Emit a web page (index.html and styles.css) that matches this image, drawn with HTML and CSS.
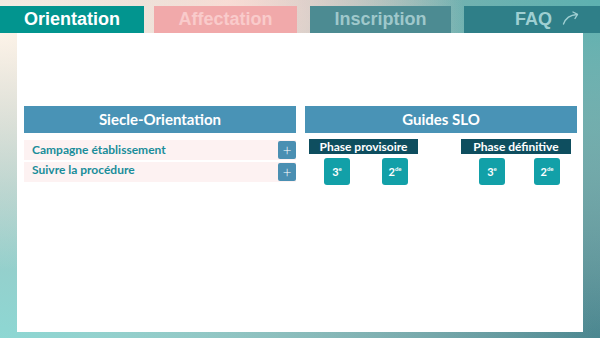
FILE: index.html
```html
<!DOCTYPE html>
<html lang="fr">

<head>
    <meta charset="UTF-8">
    <meta name="viewport" content="width=device-width, initial-scale=1.0">
    <title>Orientation</title>
    <link rel="stylesheet" href="styles.css">
</head>

<body>

    <nav class="tabs">
        <a class="tab tab-orientation">Orientation</a>
        <a class="tab tab-affectation">Affectation</a>
        <a class="tab tab-inscription">Inscription</a>
        <a class="tab tab-faq">FAQ
            <svg class="faq-arrow" width="18" height="14" viewBox="0 0 18 14">
                <path d="M1.5 13 C3.5 7.5 8 4 15 3.5" fill="none" stroke="currentColor" stroke-width="1.4" stroke-linecap="round"/>
                <path d="M11 1 L15.5 3.3 L13 7.5" fill="none" stroke="currentColor" stroke-width="1.4" stroke-linecap="round" stroke-linejoin="round"/>
            </svg>
        </a>
    </nav>

    <main class="panel">
        <section class="column">
            <h2 class="column-title">Siecle-Orientation</h2>
            <div class="rows">
                <div class="row">
                    <span class="row-label">Campagne établissement</span>
                    <button class="plus">+</button>
                </div>
                <div class="row">
                    <span class="row-label">Suivre la procédure</span>
                    <button class="plus">+</button>
                </div>
            </div>
        </section>

        <section class="column">
            <h2 class="column-title">Guides SLO</h2>
            <div class="phases">
                <div class="phase phase-first">
                    <div class="phase-title">Phase provisoire</div>
                    <div class="levels">
                        <button class="level">3<sup>e</sup></button>
                        <button class="level">2<sup>de</sup></button>
                    </div>
                </div>
                <div class="phase phase-second">
                    <div class="phase-title">Phase définitive</div>
                    <div class="levels">
                        <button class="level">3<sup>e</sup></button>
                        <button class="level">2<sup>de</sup></button>
                    </div>
                </div>
            </div>
        </section>
    </main>

</body>

</html>
```

FILE: styles.css
```css
html {
    height: 100%;
}

body {
    margin: 0;
    padding-top: 6px;
    height: 100%;
    box-sizing: border-box;
    font-family: 'Lato', 'Liberation Sans', sans-serif;
    background:
        radial-gradient(ellipse at 0 10%, #fcf3e8 0, rgba(252, 243, 232, 0) 55%),
        radial-gradient(ellipse at 38% 0, #f4c6c2 0, rgba(244, 198, 194, 0) 45%),
        radial-gradient(ellipse at 100% 0, #5db1b0 0, rgba(93, 177, 176, 0) 70%),
        radial-gradient(ellipse at 0 100%, #8dd7d3 0, rgba(141, 215, 211, 0) 70%),
        radial-gradient(ellipse at 100% 100%, #4b8790 0, rgba(75, 135, 144, 0) 60%),
        #b0b4b2;
    overflow: hidden;
}

/* onglets */
.tabs {
    display: flex;
    height: 27px;
}

.tab {
    display: flex;
    align-items: center;
    justify-content: center;
    font-family: 'Liberation Sans', Arial, sans-serif;
    font-weight: bold;
    font-size: 18px;
}

.tab-orientation {
    width: 144px;
    background-color: #02958f;
    color: #ffffff;
}

.tab-affectation {
    width: 143px;
    margin-left: 10px;
    background-color: #f1a9aa;
    color: #f9cbcb;
}

.tab-inscription {
    width: 141px;
    margin-left: 13px;
    background-color: #4c8b92;
    color: #9fc8cb;
}

.tab-faq {
    flex: 1;
    margin-left: 13px;
    justify-content: flex-end;
    padding-right: 20px;
    gap: 10px;
    background-color: #2f7f88;
    color: #9fcfd2;
}

.faq-arrow {
    margin-top: -4px;
}

/* panneau */
.panel {
    margin: 0 17px;
    height: 299px;
    background-color: #ffffff;
    padding: 73px 6px 0 7px;
    box-sizing: border-box;
    display: grid;
    grid-template-columns: 272px 272px;
    column-gap: 9px;
    align-content: start;
}

.column-title {
    margin: 0;
    height: 27px;
    line-height: 27px;
    background-color: #4993b6;
    color: #ffffff;
    text-align: center;
    font-size: 15px;
    font-weight: bold;
}

.rows {
    margin-top: 7px;
    display: flex;
    flex-direction: column;
    gap: 2px;
}

.row {
    height: 20px;
    display: flex;
    justify-content: space-between;
    align-items: flex-start;
    background-color: #fdf2f2;
    padding-left: 8px;
}

.row + .row .row-label {
    line-height: 16px;
}

.row-label {
    color: #1a8d9a;
    font-size: 12px;
    font-weight: bold;
    line-height: 19px;
}

.plus {
    width: 18px;
    height: 18px;
    margin-top: 1px;
    padding: 0;
    border: none;
    border-radius: 2px;
    background-color: #4a8fb2;
    color: #ffffff;
    font-size: 15px;
    font-weight: 300;
    line-height: 18px;
    font-family: 'Lato', sans-serif;
}

.phases {
    display: flex;
    margin-top: 6px;
}

.phase-first {
    margin-left: 4px;
    width: 109px;
}

.phase-second {
    margin-left: 43px;
    width: 110px;
}

.phase-title {
    height: 15px;
    line-height: 15px;
    background-color: #0e4e5f;
    color: #ffffff;
    text-align: center;
    font-size: 12px;
    font-weight: bold;
}

.levels {
    display: flex;
    margin-top: 4px;
    gap: 32px;
    padding-left: 15px;
}

.phase-second .levels {
    gap: 29px;
    padding-left: 18px;
}

.level {
    width: 26px;
    height: 27px;
    padding: 0;
    border: none;
    border-radius: 3px;
    background-color: #12a0a8;
    color: #ffffff;
    font-family: 'Lato', sans-serif;
    font-size: 11px;
    font-weight: bold;
}

.level sup {
    font-size: 6px;
}
```
